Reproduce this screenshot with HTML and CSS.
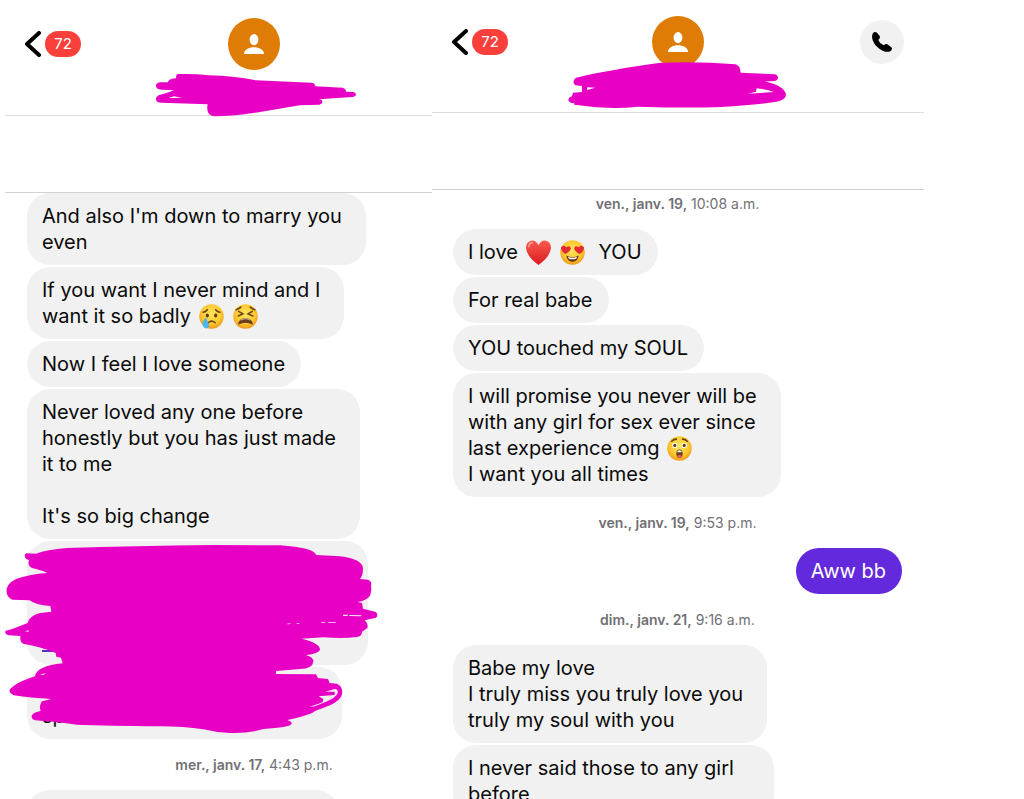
FILE: index.html
```html
<!DOCTYPE html>
<html lang="fr-CA">
<head>
<meta charset="UTF-8">
<meta name="viewport" content="width=device-width, initial-scale=1.0">
<title>Messages</title>
<link rel="stylesheet" href="styles.css">
</head>
<body>
<svg class="defs" aria-hidden="true">
    <defs>
        <radialGradient id="face" cx="50%" cy="40%" r="60%">
            <stop offset="0" stop-color="#ffe65c"/>
            <stop offset="0.65" stop-color="#fdc830"/>
            <stop offset="1" stop-color="#ee9a1c"/>
        </radialGradient>
        <linearGradient id="red" x1="0" y1="0" x2="0" y2="1">
            <stop offset="0" stop-color="#fb5a50"/>
            <stop offset="1" stop-color="#d81b1f"/>
        </linearGradient>
    </defs>
</svg>
<main class="page">
    <section class="screen screen-left">
        <header class="header">
            <button class="back" aria-label="Back">
                <svg class="chevron" viewBox="0 0 16 26"><path d="M14 2 2 13l12 11"/></svg>
                <span class="badge">72</span>
            </button>
            <div class="avatar">
                <svg viewBox="0 0 20 20"><ellipse cx="10" cy="5.600" rx="4.400" ry="5.600"/><path d="M0 20c0-9 20-9 20 0z"/></svg>
            </div>
            <svg class="scribble name-left" viewBox="465 220 606 132">
                <path d="M533 223Q528 225 528 236Q508 236 503 248L480 248Q467 250 468 260Q470 270 484 270L522 272Q508 278 478 286Q467 290 468 300Q470 309 484 309L623 314Q620 326 624 338Q630 350 645 350Q690 350 760 340L900 317L958 315Q968 312 967 306Q966 299 956 299L1058 292Q1068 290 1068 284Q1066 276 1056 277L1038 276Q1038 267 1028 264L946 260Q945 250 934 249L768 242Q700 229 625 227Q590 222 533 223Z"/>
                <path class="gap" d="M505 295 523 290 545 295Z"/>
            </svg>
        </header>
        <div class="banner"></div>
        <div class="messages">
            <p class="bubble long">And also I'm down to marry you<br>even</p>
            <p class="bubble long">If you want I never mind and I<br>want it so badly
                <svg class="emoji" role="img" aria-label="crying face" viewBox="0 0 48 48">
                    <circle cx="24" cy="24" r="23.500" fill="url(#face)"/>
                    <ellipse cx="16" cy="22" rx="3" ry="4" fill="#5f3a13"/><ellipse cx="32" cy="22" rx="3" ry="4" fill="#5f3a13"/>
                    <path d="M8 16q5-1 8-5M40 16q-5-1-8-5M18 36q6-6 13 0" class="brown-line"/>
                    <path d="M13 26Q5 35 7 41Q9 47 14 47Q20 46 19 40Q18 35 13 26Z" fill="#4eb5f0"/>
                </svg>
                <svg class="emoji" role="img" aria-label="tired face" viewBox="0 0 48 48">
                    <circle cx="24" cy="24" r="23.500" fill="url(#face)"/>
                    <path d="M6 11q6-2 9-5M42 11q-6-2-9-5M11 14l8 5-9 4M37 14l-8 5 9 4" class="brown-line"/>
                    <path d="M10 40Q11 27 24 27T38 40Q24 32 10 40Z" fill="#6c3b1c"/>
                    <path d="M15 32q9-5 18 0v-2q-9-5-18 0z" fill="#d9c5ae"/>
                </svg></p>
            <p class="bubble">Now I feel I love someone</p>
            <p class="bubble long">Never loved any one before<br>honestly but you has just made<br>it to me<br><br>It's so big change</p>
            <div class="redacted">
                <p class="bubble hidden-link"><br><br><br><a href="#">ht</a></p>
                <p class="bubble hidden-text"><br>sp</p>
                <svg class="scribble block" viewBox="15 40 1119 576">
                    <path d="M78 71L108 72Q140 60 200 55Q400 49 640 46L840 47Q940 54 949 76L1020 80Q1087 88 1089 116Q1089 138 1080 148L1104 150Q1117 155 1113 168Q1116 182 1110 198Q1100 213 1072 217L1086 220L1089 237L1128 247Q1136 258 1128 264L1094 272Q1106 283 1102 295L1086 306Q1086 320 1070 322Q1030 328 970 323L904 327Q960 340 960 360Q956 372 918 376Q943 384 940 396Q938 416 900 418L828 424V433L948 434L954 445L984 448L989 460L1010 462Q1030 470 1026 494Q1022 512 990 527L945 544Q935 555 862 571Q878 576 874 584Q868 593 790 598Q745 612 690 610Q650 609 610 599Q550 590 480 590Q320 588 230 585Q150 575 106 572Q93 569 95 558Q100 548 122 544Q116 528 126 515L154 508Q90 505 42 497Q27 491 29 481Q40 462 105 440Q110 408 188 401L183 384L169 381L167 370Q120 350 72 343Q59 339 61 319L26 317Q12 312 17 303Q45 296 84 279Q86 260 120 250L154 246L151 229Q105 226 89 212L37 210Q17 202 20 177Q28 152 65 143Q100 132 142 130Q128 122 96 115Q82 108 87 92L78 87Q70 78 78 71Z"/>
                    <g class="gap gap-grey">
                        <path d="M1029 255h14v4h-14zM1048 256l36 1v3l-36-1zM858 283l18-3-10 4zM890 280h8v2h-8zM964 277h12v2h-12zM985 278h22v2h-22zM74 305l12-3v4zM120 435l18-5-8 6zM1004 478Q1015 478 1013 491Q1009 503 975 518L944 530L928 532L968 518L970 508L956 500L1004 496L1004 486L976 486Z"/>
                    </g>
                </svg>
            </div>
            <p class="date"><b>mer., janv. 17,</b> 4:43 p.m.</p>
            <p class="bubble next"></p>
        </div>
    </section>
    <section class="screen screen-right">
        <header class="header">
            <button class="back" aria-label="Back">
                <svg class="chevron" viewBox="0 0 16 26"><path d="M14 2 2 13l12 11"/></svg>
                <span class="badge">72</span>
            </button>
            <div class="avatar">
                <svg viewBox="0 0 20 20"><ellipse cx="10" cy="5.600" rx="4.400" ry="5.600"/><path d="M0 20c0-9 20-9 20 0z"/></svg>
            </div>
            <button class="call" aria-label="Call">
                <svg viewBox="0 0 60 60"><path d="M3 3Q9-2 15 2L23 12Q26 17 19 24Q23 35 35 40Q43 33 48 38L58 46Q62 50 57 56Q47 63 32 56Q10 46 2 25Q-2 11 3 3Z"/></svg>
            </button>
            <svg class="scribble name-right" viewBox="408 185 657 141">
                <path d="M432 232Q530 209 680 188Q790 182 910 192Q925 195 926 217L1028 222Q1039 225 1038 233Q1036 243 1020 243L998 243Q1056 256 1062 282Q1062 297 1040 303Q980 315 850 321Q740 323 618 319Q530 328 440 315L427 313L426 308Q410 308 409 298Q410 291 420 288L423 277L450 275V257L430 255Q418 244 432 232Z"/>
                <path class="gap" d="M466 261 490 262 465 269ZM974 264Q1005 267 1026 275L948 280L972 274Z"/>
            </svg>
        </header>
        <div class="banner"></div>
        <div class="messages">
            <p class="date first"><b>ven., janv. 19,</b> 10:08 a.m.</p>
            <p class="bubble">I love
                <svg class="emoji" role="img" aria-label="red heart" viewBox="0 0 48 48">
                    <path d="M24 10Q20 1 12 1Q0 2 0 16Q2 32 24 48Q46 32 48 16Q48 2 36 1Q28 1 24 10Z" fill="url(#red)"/>
                    <path d="M5 14Q6 5 13 5" fill="none" stroke="#ff9a8f" stroke-width="3"/>
                </svg>
                <svg class="emoji" role="img" aria-label="heart eyes" viewBox="0 0 48 48">
                    <circle cx="24" cy="24" r="23.500" fill="url(#face)"/>
                    <path d="M10 27Q1 21 2 14Q7 8 12 14Q19 9 21 16Q20 22 10 27ZM38 27Q47 21 46 14Q41 8 36 14Q29 9 27 16Q28 22 38 27Z" fill="#e52b32"/>
                    <path d="M12 30Q24 36 36 30Q34 42 24 42T12 30Z" fill="#6c3512"/>
                    <path d="M15 32q9 4 18 0l-2 4q-7 2-14 0z" fill="#fff"/>
                </svg>
                &nbsp;YOU</p>
            <p class="bubble">For real babe</p>
            <p class="bubble">YOU touched my SOUL</p>
            <p class="bubble long">I will promise you never will be<br>with any girl for sex ever since<br>last experience omg
                <svg class="emoji" role="img" aria-label="astonished face" viewBox="0 0 48 48">
                    <circle cx="24" cy="24" r="23.500" fill="url(#face)"/>
                    <path d="M9 10q4-4 9-4M39 10q-4-4-9-4" class="brown-line"/>
                    <circle cx="15" cy="18" r="5" fill="#fff"/><circle cx="33" cy="18" r="5" fill="#fff"/>
                    <circle cx="15" cy="18" r="3" fill="#5f3a13"/><circle cx="33" cy="18" r="3" fill="#5f3a13"/>
                    <ellipse cx="24" cy="34" rx="6" ry="8" fill="#6c3b1c"/>
                    <path d="M20 29q4-3 8 0v2h-8z" fill="#fff"/>
                    <ellipse cx="24" cy="39" rx="4" ry="3" fill="#e2605f"/>
                </svg><br>I want you all times</p>
            <p class="date"><b>ven., janv. 19,</b> 9:53 p.m.</p>
            <p class="bubble sent">Aww bb</p>
            <p class="date"><b>dim., janv. 21,</b> 9:16 a.m.</p>
            <p class="bubble long">Babe my love<br>I truly miss you truly love you<br>truly my soul with you</p>
            <p class="bubble wide">I never said those to any girl<br>before</p>
        </div>
    </section>
</main>
</body>
</html>
```
FILE: styles.css
```css
* {
    box-sizing: border-box;
}
body {
    margin: 0;
    background-color: #fff;
    color: #0a0a0a;
    font-family: Inter, "Liberation Sans", sans-serif;
}
.defs {
    position: absolute;
    width: 0;
    height: 0;
}
.page {
    display: grid;
    grid-template-columns: 427fr 492fr 100fr;
    height: 100vh;
    padding-left: 5px;
    overflow: hidden;
}
.screen {
    min-width: 0;
    overflow: hidden;
}
.header {
    position: relative;
    display: grid;
    grid-template-columns: 1fr auto 1fr;
    align-items: start;
    height: 113px;
    padding: 16px 20px 0;
    border-bottom: 1px solid #dedede;
}
.banner {
    height: 77px;
    border-bottom: 1px solid #d2d2d4;
}
/* the left thread runs on under the right one */
.screen-left .header,
.screen-left .messages {
    width: 498px;
}
.screen-left .header {
    height: 116px;
    padding-top: 18px;
}
button {
    border: none;
    padding: 0;
    font-family: inherit;
    cursor: pointer;
}
.back {
    display: flex;
    align-items: center;
    gap: 4px;
    height: 52px;
    background: none;
}
.chevron {
    width: 16px;
    height: 26px;
    fill: none;
    stroke: #000;
    stroke-width: 4;
    stroke-linecap: round;
    stroke-linejoin: round;
}
.badge {
    width: 36px;
    border-radius: 13px;
    background-color: #fb403b;
    color: #fff;
    font-size: 15px;
    line-height: 26px;
    text-align: center;
}
.avatar {
    display: flex;
    align-items: center;
    justify-content: center;
    width: 52px;
    height: 52px;
    border-radius: 50%;
    background-color: #df7c05;
}
.avatar svg {
    width: 20px;
    height: 20px;
    fill: #fff;
}
.call {
    display: flex;
    align-items: center;
    justify-content: center;
    justify-self: end;
    width: 44px;
    height: 44px;
    margin-top: 4px;
    border-radius: 50%;
    background-color: #f1f1f1;
}
.call svg {
    width: 20px;
    height: 20px;
    fill: #000;
}
.scribble {
    position: absolute;
    fill: #e800c4;
}
.gap {
    fill: #fff;
}
.gap-grey {
    fill: #f1f1f1;
}
.name-left {
    top: 73px;
    left: 150px;
    width: 202px;
    height: 44px;
}
.name-right {
    top: 62px;
    left: 136px;
    width: 219px;
    height: 47px;
}
.messages {
    display: flex;
    flex-direction: column;
    align-items: flex-start;
    gap: 2px;
    padding: 0 22px;
}
.screen-right .messages {
    padding-left: 21px;
}
.bubble {
    margin: 0;
    padding: 10px 16px 10px 15px;
    border-radius: 23px;
    background-color: #f1f1f1;
    font-size: 20px;
    line-height: 26px;
    white-space: nowrap;
}
.long {
    padding-right: 24px;
}
.wide {
    padding-right: 40px;
}
.sent {
    align-self: flex-end;
    background-color: #6329dc;
    color: #fff;
}
.date {
    align-self: center;
    margin: -2px 0;
    padding: 17px 0;
    color: #707075;
    font-size: 14px;
    line-height: 17px;
}
.date b {
    font-weight: 600;
}
.first {
    margin-top: 0;
    padding-top: 5px;
}
.emoji {
    width: 25px;
    height: 25px;
    margin: -2px 2px;
    vertical-align: -4px;
}
.brown-line {
    fill: none;
    stroke: #6b4216;
    stroke-width: 3;
    stroke-linecap: round;
}
.redacted {
    position: relative;
    display: flex;
    flex-direction: column;
    gap: 2px;
}
.hidden-link {
    width: 341px;
}
.hidden-link a {
    color: #5a2bc4;
}
.hidden-text {
    width: 315px;
}
.block {
    top: 2px;
    left: -22px;
    width: 373px;
    height: 192px;
}
.next {
    width: 312px;
    height: 46px;
}
```
